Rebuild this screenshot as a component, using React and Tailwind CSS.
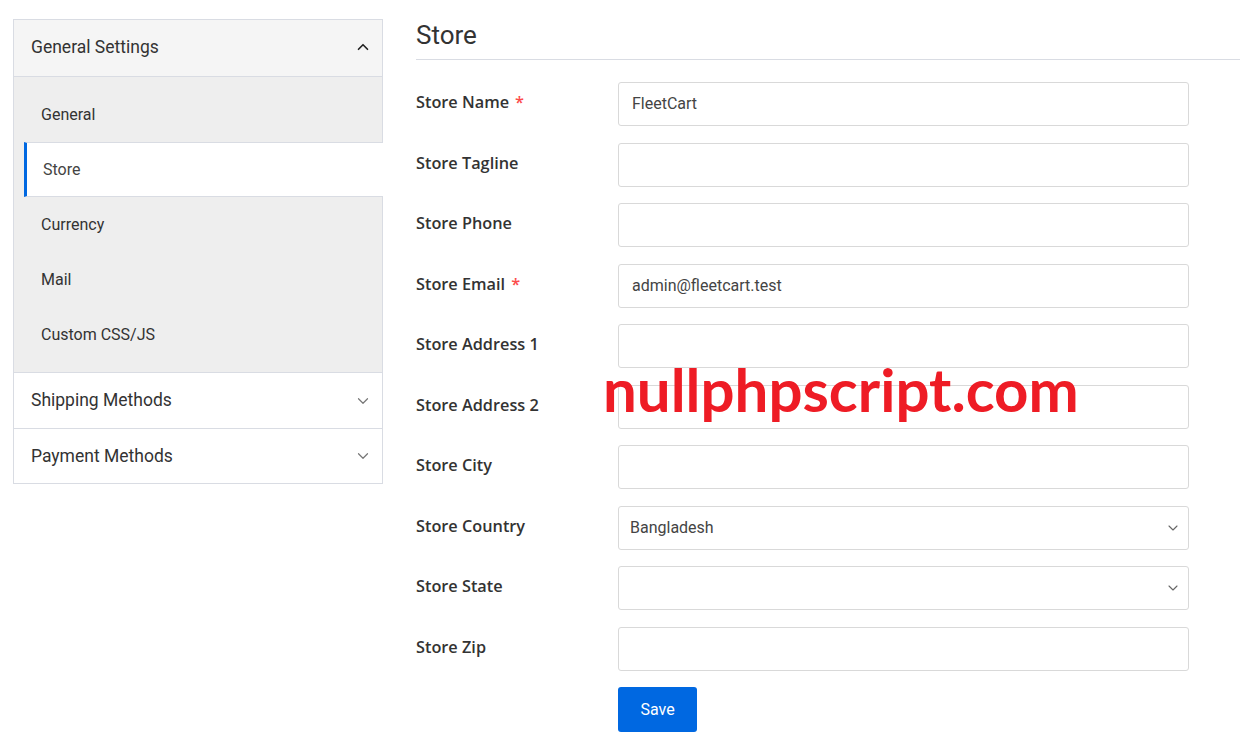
import React from 'react';
import { ChevronUp, ChevronDown } from 'lucide-react';

const subItems = ['General', 'Store', 'Currency', 'Mail', 'Custom CSS/JS'];

const fields = [
  { label: 'Store Name', required: true, value: 'FleetCart' },
  { label: 'Store Tagline' },
  { label: 'Store Phone' },
  { label: 'Store Email', required: true, value: 'admin@fleetcart.test' },
  { label: 'Store Address 1' },
  { label: 'Store Address 2' },
  { label: 'Store City' },
  { label: 'Store Country', select: true, value: 'Bangladesh' },
  { label: 'Store State', select: true, value: '' },
  { label: 'Store Zip' },
];

const Sidebar = () => (
  <div className="w-[370px] border border-[#d9dce3] bg-white font-['Roboto',sans-serif] text-[#333]">
    {/* General Settings (open) */}
    <div className="flex h-[57px] items-center justify-between bg-[#f5f5f5] border-b border-[#d9dce3] pb-[2px] pl-[17px] pr-[10px]">
      <span className="text-[17.5px]">General Settings</span>
      <ChevronUp className="h-[18px] w-[18px] text-[#222]" strokeWidth={2.2} />
    </div>
    <div className="bg-[#eeeeee] py-[10px]">
      {subItems.map((item) =>
        item === 'Store' ? (
          <div
            key={item}
            className="ml-[10px] mr-[-1px] flex h-[55px] items-center border-y border-l-[3px] border-[#d9dce3] border-l-[#0068e1] bg-white pl-[16px] text-[16px] text-[#444]"
          >
            {item}
          </div>
        ) : (
          <div key={item} className="ml-[10px] flex h-[55px] items-center pl-[17px] text-[16px] text-[#333]">
            {item}
          </div>
        )
      )}
    </div>
    {['Shipping Methods', 'Payment Methods'].map((t, i) => (
      <div
        key={t}
        className={`flex items-center justify-between border-t border-[#d9dce3] pl-[17px] pr-[10px] ${i === 0 ? 'h-[56px]' : 'h-[55px]'}`}
      >
        <span className="text-[17.5px]">{t}</span>
        <ChevronDown className="h-[18px] w-[18px] text-[#777]" strokeWidth={1.6} />
      </div>
    ))}
  </div>
);

const Field = ({ label, required, value, select }) => (
  <div className="flex items-start">
    <label className="w-[202px] pt-[8px] font-['Open_Sans',sans-serif] text-[16.3px] font-semibold text-[#333]">
      {label}
      {required && <span className="ml-[6px] text-[#fc4b4b]">*</span>}
    </label>
    <div className="relative flex h-[44px] w-[571px] items-center rounded-[3px] border border-[#d9d9d9] bg-white font-['Roboto',sans-serif] text-[16px] text-[#444]">
      <span className={select ? 'pl-[11px]' : 'pl-[13px]'}>{value}</span>
      {select && (
        <ChevronDown className="absolute right-[7px] h-[16px] w-[16px] text-[#666]" strokeWidth={1.6} />
      )}
    </div>
  </div>
);

export default function App() {
  return (
    <div className="relative flex min-h-[751px] w-[1240px] items-start bg-white pl-[13px] pt-[19px]">
      <Sidebar />
      <div className="ml-[33px] flex-1">
        <h3 className="mt-[1px] border-b border-[#d9dce3] pb-[9px] font-['Roboto',sans-serif] text-[26px] leading-[30px] text-[#333]">
          Store
        </h3>
        <div className="mt-[22px] flex flex-col gap-y-[16.5px]">
          {fields.map((f) => (
            <Field key={f.label} {...f} />
          ))}
          <div className="flex">
            <div className="w-[202px]" />
            <button className="h-[45px] w-[79px] rounded-[3px] bg-[#0068e1] font-['Roboto',sans-serif] text-[16px] text-white">
              Save
            </button>
          </div>
        </div>
      </div>
      {/* watermark */}
      <div className="pointer-events-none absolute left-[603px] top-[359px] font-['Lato',sans-serif] text-[60px] font-bold leading-none text-[#ee1c25]">
        nullphpscript.com
      </div>
    </div>
  );
}
